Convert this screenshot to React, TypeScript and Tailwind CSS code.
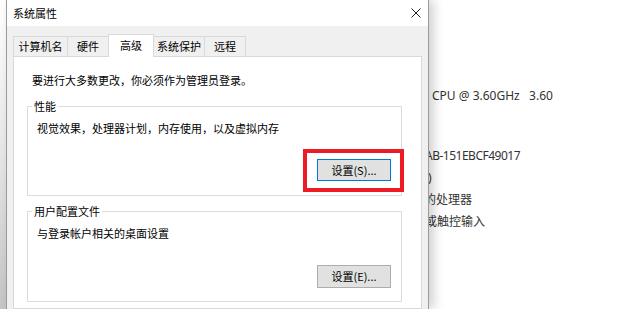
export default function App() {
  const tabs = [
    { label: '计算机名', w: 'w-[55px]', active: false },
    { label: '硬件', w: 'w-[42px]', active: false },
    { label: '高级', w: 'w-[46px]', active: true },
    { label: '系统保护', w: 'w-[52px]', active: false },
    { label: '远程', w: 'w-[42px]', active: false },
  ];

  return (
    <div className="w-[620px] h-[309px] overflow-hidden flex bg-white font-['Noto_Sans_CJK_SC',sans-serif] text-[11px] leading-[15px] text-black">
      {/* window behind, left edge */}
      <div className="w-[6px] shrink-0 bg-gradient-to-b from-white via-[#e6e6e6] to-[#c4c4c4]" />

      {/* dialog */}
      <div className="relative z-10 w-[423px] shrink-0 flex flex-col border-x border-[#9a9a9a] shadow-[5px_0_10px_rgba(0,0,0,0.18)]">
        <div className="h-[26px] shrink-0 bg-white flex items-center justify-between pl-[6px] pr-[7px]">
          <span>系统属性</span>
          <svg width="10" height="10" viewBox="0 0 10 10" className="-mt-px">
            <path d="M0.5 0.5L9.5 9.5M9.5 0.5L0.5 9.5" stroke="#222" strokeWidth="1" fill="none" />
          </svg>
        </div>

        <div className="flex-1 bg-[#f0f0f0] px-[6px] pt-[8px] flex flex-col">
          <div className="flex items-end h-[22px]">
            {tabs.map((t, i) =>
              t.active ? (
                <div
                  key={t.label}
                  className={`${t.w} h-[23px] -mb-px -ml-px relative z-10 bg-white border border-b-0 border-[#d9d9d9] flex items-center justify-center pb-px`}
                >
                  {t.label}
                </div>
              ) : (
                <div
                  key={t.label}
                  className={`${t.w} h-[20px] ${i > 0 ? '-ml-px' : ''} bg-[#f0f0f0] border border-b-0 border-[#d9d9d9] flex items-center justify-center`}
                >
                  {t.label}
                </div>
              )
            )}
          </div>

          <div className="flex-1 bg-white border border-[#d9d9d9]">
            <div className="pt-[16px] pl-[18px]">要进行大多数更改，你必须作为管理员登录。</div>

            <fieldset className="ml-[13px] w-[375px] mt-[11px] border border-[#dcdcdc]">
              <legend className="ml-[4px] px-[2px]">性能</legend>
              <div className="pl-[9px] pr-[10px] pt-[7px] pb-[14px]">
                <div>视觉效果，处理器计划，内存使用，以及虚拟内存</div>
                <div className="flex justify-end mt-[23px]">
                  <div className="relative">
                    <button className="w-[74px] h-[22px] bg-[#e1e1e1] border border-[#0078d7] flex items-center justify-center">
                      设置(S)...
                    </button>
                    <span className="absolute -left-[14px] -right-[13px] -top-[10px] -bottom-[11px] border-[4px] border-[#ed1c24]" />
                  </div>
                </div>
              </div>
            </fieldset>

            <fieldset className="ml-[13px] w-[375px] mt-[8px] border border-[#dcdcdc]">
              <legend className="ml-[4px] px-[2px]">用户配置文件</legend>
              <div className="pl-[9px] pr-[10px] pt-[7px] pb-[13px]">
                <div>与登录帐户相关的桌面设置</div>
                <div className="flex justify-end mt-[24px]">
                  <button className="w-[74px] h-[23px] bg-[#e1e1e1] border border-[#adadad] flex items-center justify-center">
                    设置(E)...
                  </button>
                </div>
              </div>
            </fieldset>
          </div>
        </div>
      </div>

      {/* window behind, right part */}
      <div className="flex-1 min-w-0 bg-white overflow-hidden font-['Noto_Sans','Noto_Sans_CJK_SC',sans-serif] text-[12px] leading-[22px] text-[#333] whitespace-pre">
        <div className="mt-[85px] pl-[3px]">CPU @ 3.60GHz   3.60</div>
        <div className="mt-[38px] -ml-[4px] tracking-[-0.5px]">AB-151EBCF49017</div>
        <div className="-ml-[1px]">)</div>
        <div className="-ml-[5px]">的处理器</div>
        <div className="-ml-[4px]">或触控输入</div>
      </div>
    </div>
  );
}
